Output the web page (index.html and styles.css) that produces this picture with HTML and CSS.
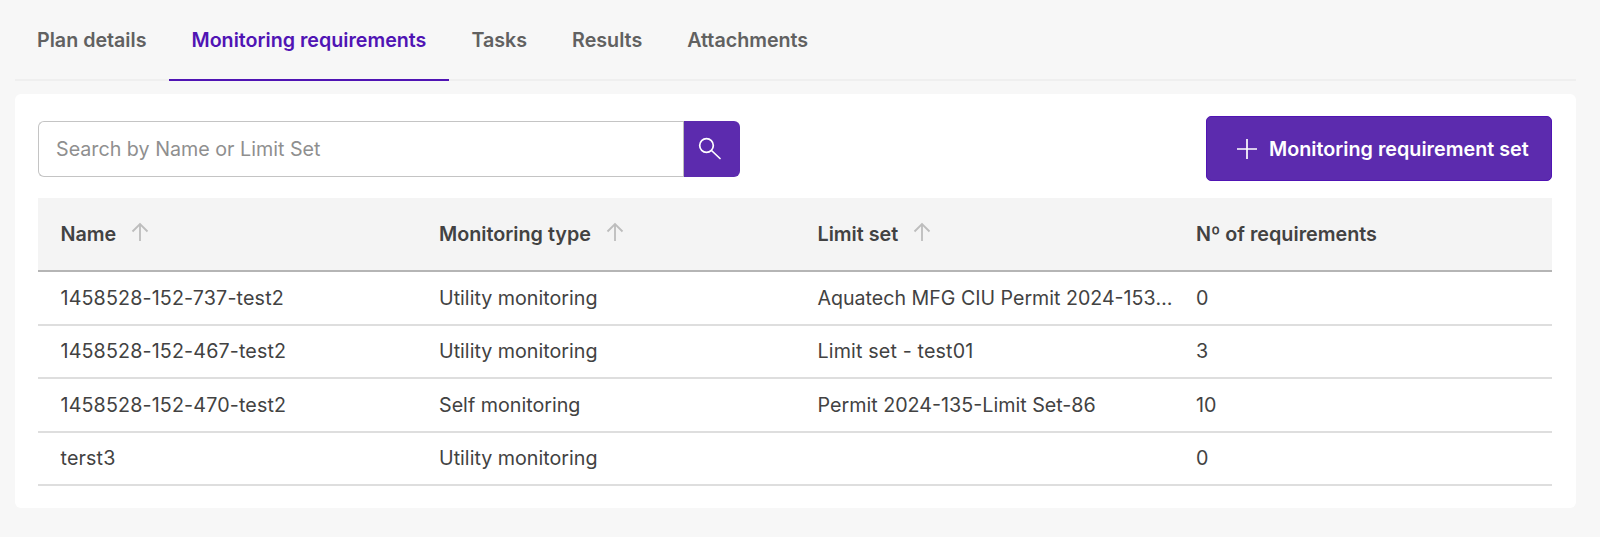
FILE: index.html
```html
<!DOCTYPE html>
<html lang="en">
<head>
<meta charset="utf-8">
<title>Monitoring requirements</title>
<link rel="stylesheet" href="styles.css">
</head>
<body>
<nav class="tabs">
  <a class="tab">Plan details</a>
  <a class="tab active">Monitoring requirements</a>
  <a class="tab">Tasks</a>
  <a class="tab">Results</a>
  <a class="tab">Attachments</a>
</nav>
<main class="card">
  <div class="toolbar">
    <form class="search">
      <input class="search-input" type="text" placeholder="Search by Name or Limit Set">
      <button class="search-btn" type="button" aria-label="Search">
        <svg class="search-icon" width="24" height="24" viewBox="0 0 24 24" fill="none" stroke="#fff" stroke-width="1.7" stroke-linecap="round"><circle cx="8.500" cy="8.500" r="6.800"/><path d="M13.500 13.500L22 21.500"/></svg>
      </button>
    </form>
    <button class="add-btn" type="button">
      <svg width="22" height="22" viewBox="0 0 22 22" fill="none" stroke="#fff" stroke-width="1.7"><path d="M11 1v20M1 11h20"/></svg>
      <span>Monitoring requirement set</span>
    </button>
  </div>
  <table class="grid">
    <thead>
      <tr>
        <th><span class="th-inner">Name <svg class="sort" width="20" height="20" viewBox="0 0 20 20" fill="none" stroke="#bdbdbd" stroke-width="1.8"><path d="M10 19V2M2.500 9.500L10 2l7.500 7.500"/></svg></span></th>
        <th><span class="th-inner">Monitoring type <svg class="sort" width="20" height="20" viewBox="0 0 20 20" fill="none" stroke="#bdbdbd" stroke-width="1.8"><path d="M10 19V2M2.500 9.500L10 2l7.500 7.500"/></svg></span></th>
        <th><span class="th-inner">Limit set <svg class="sort" width="20" height="20" viewBox="0 0 20 20" fill="none" stroke="#bdbdbd" stroke-width="1.8"><path d="M10 19V2M2.500 9.500L10 2l7.500 7.500"/></svg></span></th>
        <th><span class="th-inner">Nº of requirements</span></th>
      </tr>
    </thead>
    <tbody>
      <tr><td class="code">1458528-152-737-test2</td><td>Utility monitoring</td><td class="tight">Aquatech MFG CIU Permit 2024-153-Limit Set</td><td>0</td></tr>
      <tr><td class="code">1458528-152-467-test2</td><td>Utility monitoring</td><td class="code">Limit set - test01</td><td>3</td></tr>
      <tr><td class="code">1458528-152-470-test2</td><td>Self monitoring</td><td>Permit 2024-135-Limit Set-86</td><td>10</td></tr>
      <tr><td class="code">terst3</td><td>Utility monitoring</td><td></td><td>0</td></tr>
    </tbody>
  </table>
</main>
</body>
</html>
```
FILE: styles.css
```css
* { box-sizing: border-box; }
html, body { height: 100%; }
body {
  margin: 0;
  padding: 0 24px 0 15px;
  background: #f7f7f7;
  font-family: Inter, "Liberation Sans", sans-serif;
  color: #424242;
  overflow: hidden;
}
.tabs {
  display: flex;
  height: 81px;
  border-bottom: 2px solid #efefef;
}
.tab {
  display: block;
  height: 81px;
  padding: 28px 22.500px 0;
  font-size: 19.680px;
  line-height: 24px;
  font-weight: 600;
  color: #616161;
}
.tab:first-child { padding-left: 22px; }
.tab.active {
  color: #5014b4;
  border-bottom: 2px solid #5014b4;
}
.card {
  margin-top: 13px;
  height: 414px;
  padding: 22px 24px 0 23px;
  background: #fff;
  border-radius: 6px;
}
.toolbar {
  display: flex;
  justify-content: space-between;
  align-items: center;
  height: 65px;
}
.search { display: flex; height: 56px; }
.search-input {
  width: 645px;
  height: 56px;
  padding: 0 17px;
  border: 1.500px solid #c4c4c4;
  border-right: 0;
  border-radius: 6px 0 0 6px;
  outline: 0;
  font: 400 19.700px Inter, "Liberation Sans", sans-serif;
  color: #424242;
  background: #fff;
}
.search-input::placeholder { color: #8f8f8f; opacity: 1; }
.search-btn {
  display: flex;
  align-items: center;
  justify-content: center;
  width: 57px;
  height: 56px;
  padding: 0;
  border: 0;
  border-left: 1.500px solid #bdbdbd;
  border-radius: 0 6px 6px 0;
  background: #5c2bae;
}
.search-icon { margin-right: 5px; }
.add-btn {
  display: flex;
  align-items: center;
  gap: 11px;
  width: 346px;
  height: 65px;
  padding: 0 0 0 29px;
  border: 1px solid #5014b4;
  border-radius: 5px;
  background: #5c2bae;
  color: #fff;
  font: 600 19.750px Inter, "Liberation Sans", sans-serif;
  white-space: nowrap;
}
.grid {
  width: 100%;
  margin-top: 17px;
  border-collapse: collapse;
  table-layout: fixed;
  font-size: 19.700px;
}
.grid th {
  height: 73px;
  padding: 0 22.500px 1px;
  background: #f4f4f4;
  border-bottom: 2px solid #b5b5b5;
  text-align: left;
  font-size: 19.750px;
  font-weight: 600;
  color: #424242;
}
.th-inner { display: flex; align-items: center; gap: 9px; white-space: pre; }
.sort { margin-top: -4px; }
.grid td {
  height: 53.500px;
  padding: 0 0 0 22.500px;
  border-bottom: 2px solid #dedede;
  font-weight: 400;
  color: #424242;
  white-space: nowrap;
  overflow: hidden;
  text-overflow: ellipsis;
}
.grid td.code { letter-spacing: 0.140px; }
.grid td.tight { font-size: 19.600px; }
```
